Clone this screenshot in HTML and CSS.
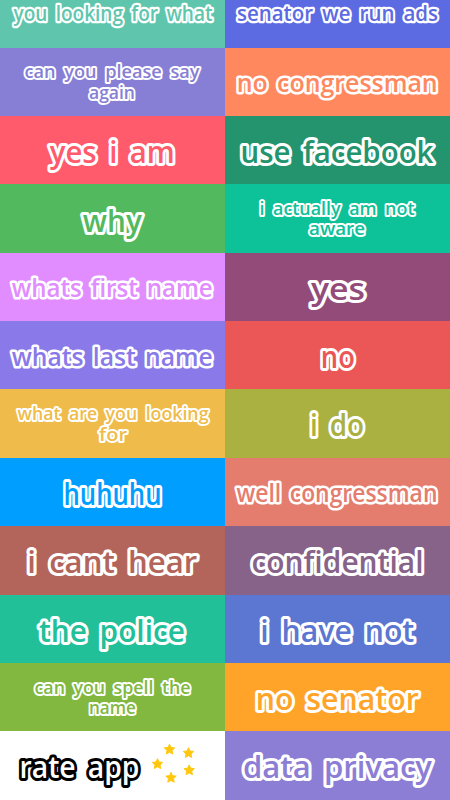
FILE: index.html
```html
<!DOCTYPE html>
<html lang="en">
<head>
  <meta charset="UTF-8" />
  <meta name="viewport" content="width=device-width, initial-scale=1.0" />
  <title>Soundboard</title>
  <link rel="stylesheet" href="styles.css">
</head>
<body>
  <main class="board">
    <svg class="tile aqua small" viewBox="0 0 225 68.4"><text x="113" y="41.6" textLength="199" lengthAdjust="spacingAndGlyphs">you looking for what</text></svg>
    <svg class="tile indigo small" viewBox="0 0 225 68.4"><text x="112.5" y="42" textLength="201" lengthAdjust="spacingAndGlyphs">senator we run ads</text></svg>

    <svg class="tile lavender tiny" viewBox="0 0 225 68.4"><text x="112" y="30.2" textLength="175" lengthAdjust="spacingAndGlyphs">can you please say</text><text x="112" y="51" textLength="46" lengthAdjust="spacingAndGlyphs">again</text></svg>
    <svg class="tile coral medium" viewBox="0 0 225 68.4"><text x="112.2" y="44" textLength="201" lengthAdjust="spacingAndGlyphs">no congressman</text></svg>

    <svg class="tile red" viewBox="0 0 225 68.4"><text x="112.3" y="47.3" textLength="125" lengthAdjust="spacingAndGlyphs">yes i am</text></svg>
    <svg class="tile forest" viewBox="0 0 225 68.4"><text x="112" y="47.3" textLength="193" lengthAdjust="spacingAndGlyphs">use facebook</text></svg>

    <svg class="tile green" viewBox="0 0 225 68.4"><text x="112.3" y="47.6" textLength="59" lengthAdjust="spacingAndGlyphs">why</text></svg>
    <svg class="tile mint tiny" viewBox="0 0 225 68.4"><text x="112" y="30.6" textLength="155" lengthAdjust="spacingAndGlyphs">i actually am not</text><text x="112" y="51.4" textLength="56" lengthAdjust="spacingAndGlyphs">aware</text></svg>

    <svg class="tile pink medium" viewBox="0 0 225 68.4"><text x="112.2" y="43.7" textLength="201" lengthAdjust="spacingAndGlyphs">whats first name</text></svg>
    <svg class="tile plum" viewBox="0 0 225 68.4"><text x="113" y="47.2" textLength="54" lengthAdjust="spacingAndGlyphs">yes</text></svg>

    <svg class="tile violet medium" viewBox="0 0 225 68.4"><text x="112.2" y="44.6" textLength="201" lengthAdjust="spacingAndGlyphs">whats last name</text></svg>
    <svg class="tile tomato" viewBox="0 0 225 68.4"><text x="112.8" y="47.2" textLength="34" lengthAdjust="spacingAndGlyphs">no</text></svg>

    <svg class="tile mustard tiny" viewBox="0 0 225 68.4"><text x="113" y="31" textLength="191" lengthAdjust="spacingAndGlyphs">what are you looking</text><text x="113" y="51.6" textLength="28" lengthAdjust="spacingAndGlyphs">for</text></svg>
    <svg class="tile olive" viewBox="0 0 225 68.4"><text x="112" y="46.8" textLength="54" lengthAdjust="spacingAndGlyphs">i do</text></svg>

    <svg class="tile blue" viewBox="0 0 225 68.4"><text x="112.5" y="46.7" textLength="98" lengthAdjust="spacingAndGlyphs">huhuhu</text></svg>
    <svg class="tile salmon medium" viewBox="0 0 225 68.4"><text x="112" y="44.1" textLength="201" lengthAdjust="spacingAndGlyphs">well congressman</text></svg>

    <svg class="tile brick" viewBox="0 0 225 68.4"><text x="112.2" y="47" textLength="170" lengthAdjust="spacingAndGlyphs">i cant hear</text></svg>
    <svg class="tile mauve" viewBox="0 0 225 68.4"><text x="112.5" y="47" textLength="172" lengthAdjust="spacingAndGlyphs">confidential</text></svg>

    <svg class="tile teal" viewBox="0 0 225 68.4"><text x="112" y="47.4" textLength="146" lengthAdjust="spacingAndGlyphs">the police</text></svg>
    <svg class="tile royal" viewBox="0 0 225 68.4"><text x="112.3" y="47.4" textLength="154" lengthAdjust="spacingAndGlyphs">i have not</text></svg>

    <svg class="tile lime tiny" viewBox="0 0 225 68.4"><text x="112.5" y="30.6" textLength="156" lengthAdjust="spacingAndGlyphs">can you spell the</text><text x="112.5" y="51.2" textLength="47" lengthAdjust="spacingAndGlyphs">name</text></svg>
    <svg class="tile orange" viewBox="0 0 225 68.4"><text x="112.3" y="47.3" textLength="163" lengthAdjust="spacingAndGlyphs">no senator</text></svg>

    <svg class="tile rate" viewBox="0 0 225 68.4">
      <defs>
        <path id="star" d="M0-5 1.5-1.7 5.2-1.3 2.5 1.3 3.2 4.8 0 3-3.2 4.8-2.5 1.3-5.2-1.3-1.5-1.7Z" />
      </defs>
      <text x="79.5" y="47.2" textLength="120" lengthAdjust="spacingAndGlyphs">rate app</text>
      <g class="stars">
        <use href="#star" x="169.5" y="18.2" />
        <use href="#star" x="188.5" y="21.7" />
        <use href="#star" x="157.5" y="32.7" />
        <use href="#star" x="189.2" y="38.9" />
        <use href="#star" x="171" y="46.4" />
      </g>
    </svg>
    <svg class="tile purple" viewBox="0 0 225 68.4"><text x="112.5" y="47" textLength="189" lengthAdjust="spacingAndGlyphs">data privacy</text></svg>
  </main>
</body>
</html>
```
FILE: styles.css
```css
body {
  margin: 0;
  height: 800px;
  overflow: hidden;
  background: #fff;
}

/* scrolled a little, so the first row is cut off */
.board {
  display: grid;
  grid-template-columns: 1fr 1fr;
  grid-auto-rows: 68.4px;
  margin-top: -20.9px;
}

.tile {
  display: block;
  width: 100%;
  height: 100%;
  background: var(--c);
  cursor: pointer;
}

.tile text {
  font-family: "Open Sans", "DejaVu Sans", sans-serif;
  font-size: 30px;
  font-weight: 600;
  word-spacing: 5px;
  text-anchor: middle;
  fill: var(--c);
  stroke: #fff;
  stroke-width: 6px;
  stroke-linejoin: round;
  paint-order: stroke;
}

.medium text {
  font-size: 26px;
  word-spacing: 3px;
  stroke-width: 5.2px;
}

.small text {
  font-size: 22px;
  word-spacing: 4px;
  stroke-width: 4.6px;
}

.tiny text {
  font-size: 18.5px;
  word-spacing: 4px;
  stroke-width: 3.9px;
}

.aqua { --c: #5fc6ad; }
.indigo { --c: #5d6be3; }
.lavender { --c: #877ed5; }
.coral { --c: #ff885f; }
.red { --c: #ff5b6c; }
.forest { --c: #23946e; }
.green { --c: #52b95f; }
.mint { --c: #0dc199; }
.pink { --c: #e18cff; }
.plum { --c: #934b79; }
.violet { --c: #8979e9; }
.tomato { --c: #eb5757; }
.mustard { --c: #efbc4b; }
.olive { --c: #aab141; }
.blue { --c: #009eff; }
.salmon { --c: #e57d6f; }
.brick { --c: #b3655b; }
.mauve { --c: #886389; }
.teal { --c: #22c098; }
.royal { --c: #5c77d1; }
.lime { --c: #82b83f; }
.orange { --c: #ffa428; }
.purple { --c: #8c7dd5; }

.rate { --c: #fff; }

.rate text {
  stroke: #000;
}

.stars {
  fill: #ffc80f;
  stroke: #ffc80f;
  stroke-width: 1px;
  stroke-linejoin: round;
}
```
